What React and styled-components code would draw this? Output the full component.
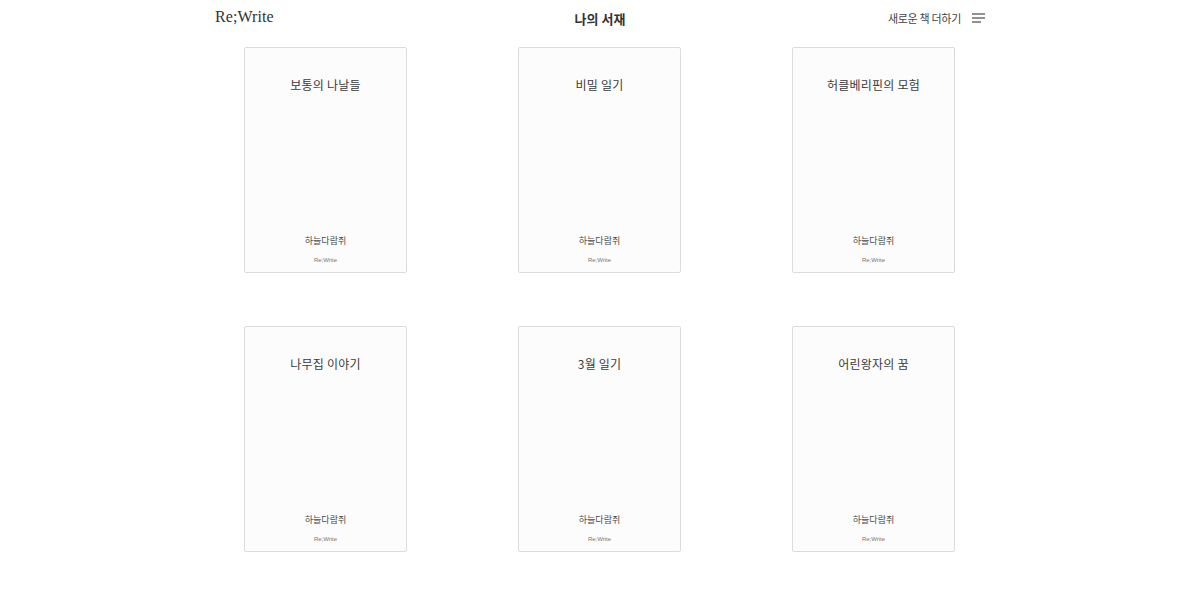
import React from 'react';
import styled, { createGlobalStyle } from 'styled-components';

const GlobalStyle = createGlobalStyle`
  html, body {
    margin: 0;
    padding: 0;
    background: #fff;
  }
  body {
    font-family: "Liberation Serif", "Noto Sans CJK KR", serif;
    color: #333;
  }
`;

const books = [
  { title: '보통의 나날들', author: '하늘다람쥐' },
  { title: '비밀 일기', author: '하늘다람쥐' },
  { title: '허클베리핀의 모험', author: '하늘다람쥐' },
  { title: '나무집 이야기', author: '하늘다람쥐' },
  { title: '3월 일기', author: '하늘다람쥐' },
  { title: '어린왕자의 꿈', author: '하늘다람쥐' },
];

const Page = styled.div`
  width: 100%;
  min-height: 608px;
`;

const Header = styled.header`
  width: 770px;
  height: 36px;
  margin: 0 auto;
  display: grid;
  grid-template-columns: 1fr auto 1fr;
  align-items: center;
`;

const Logo = styled.div`
  font-family: "Liberation Serif", serif;
  font-size: 16px;
  color: #333;
  letter-spacing: 0.1px;
  margin-top: -2px;
`;

const PageTitle = styled.h1`
  margin: 0;
  font-size: 13px;
  font-weight: 700;
  color: #333;
  font-family: "Noto Sans CJK KR", sans-serif;
`;

const Actions = styled.div`
  display: flex;
  justify-content: flex-end;
  align-items: center;
  gap: 11px;
`;

const AddLink = styled.a`
  font-family: "Noto Sans CJK KR", sans-serif;
  font-size: 11px;
  letter-spacing: -0.3px;
  color: #444;
  text-decoration: none;
  cursor: pointer;
`;

const MenuButton = styled.button`
  border: none;
  background: none;
  padding: 0;
  display: flex;
  cursor: pointer;
`;

const Shelf = styled.main`
  width: 711px;
  margin: 11px 0 0 calc(50% - 356px);
  display: grid;
  grid-template-columns: repeat(3, 163px);
  column-gap: 111px;
  row-gap: 53px;
`;

const Card = styled.div`
  box-sizing: border-box;
  height: 226px;
  background: #fcfcfc;
  border: 1px solid #dcdcdc;
  border-radius: 2px;
  display: flex;
  flex-direction: column;
  align-items: center;
  padding: 28px 8px 9px;
  font-family: "Noto Sans CJK KR", sans-serif;
`;

const Title = styled.div`
  font-size: 12px;
  color: #3a3a3a;
  letter-spacing: 0.2px;
`;

const Author = styled.div`
  margin-top: auto;
  font-size: 9px;
  color: #4a4a4a;
`;

const Imprint = styled.div`
  margin-top: 10px;
  font-family: "Liberation Sans", sans-serif;
  font-size: 6px;
  color: #777;
`;

function MenuIcon() {
  return (
    <svg width="13" height="11" viewBox="0 0 13 11">
      <g stroke="#555" strokeWidth="1.3">
        <line x1="0" y1="1" x2="13" y2="1" />
        <line x1="0" y1="5" x2="13" y2="5" />
        <line x1="0" y1="9" x2="9" y2="9" />
      </g>
    </svg>
  );
}

export default function App() {
  return (
    <Page>
      <GlobalStyle />
      <Header>
        <Logo>Re;Write</Logo>
        <PageTitle>나의 서재</PageTitle>
        <Actions>
          <AddLink>새로운 책 더하기</AddLink>
          <MenuButton type="button" aria-label="menu">
            <MenuIcon />
          </MenuButton>
        </Actions>
      </Header>
      <Shelf>
        {books.map(book => (
          <Card key={book.title}>
            <Title>{book.title}</Title>
            <Author>{book.author}</Author>
            <Imprint>Re;Write</Imprint>
          </Card>
        ))}
      </Shelf>
    </Page>
  );
}
